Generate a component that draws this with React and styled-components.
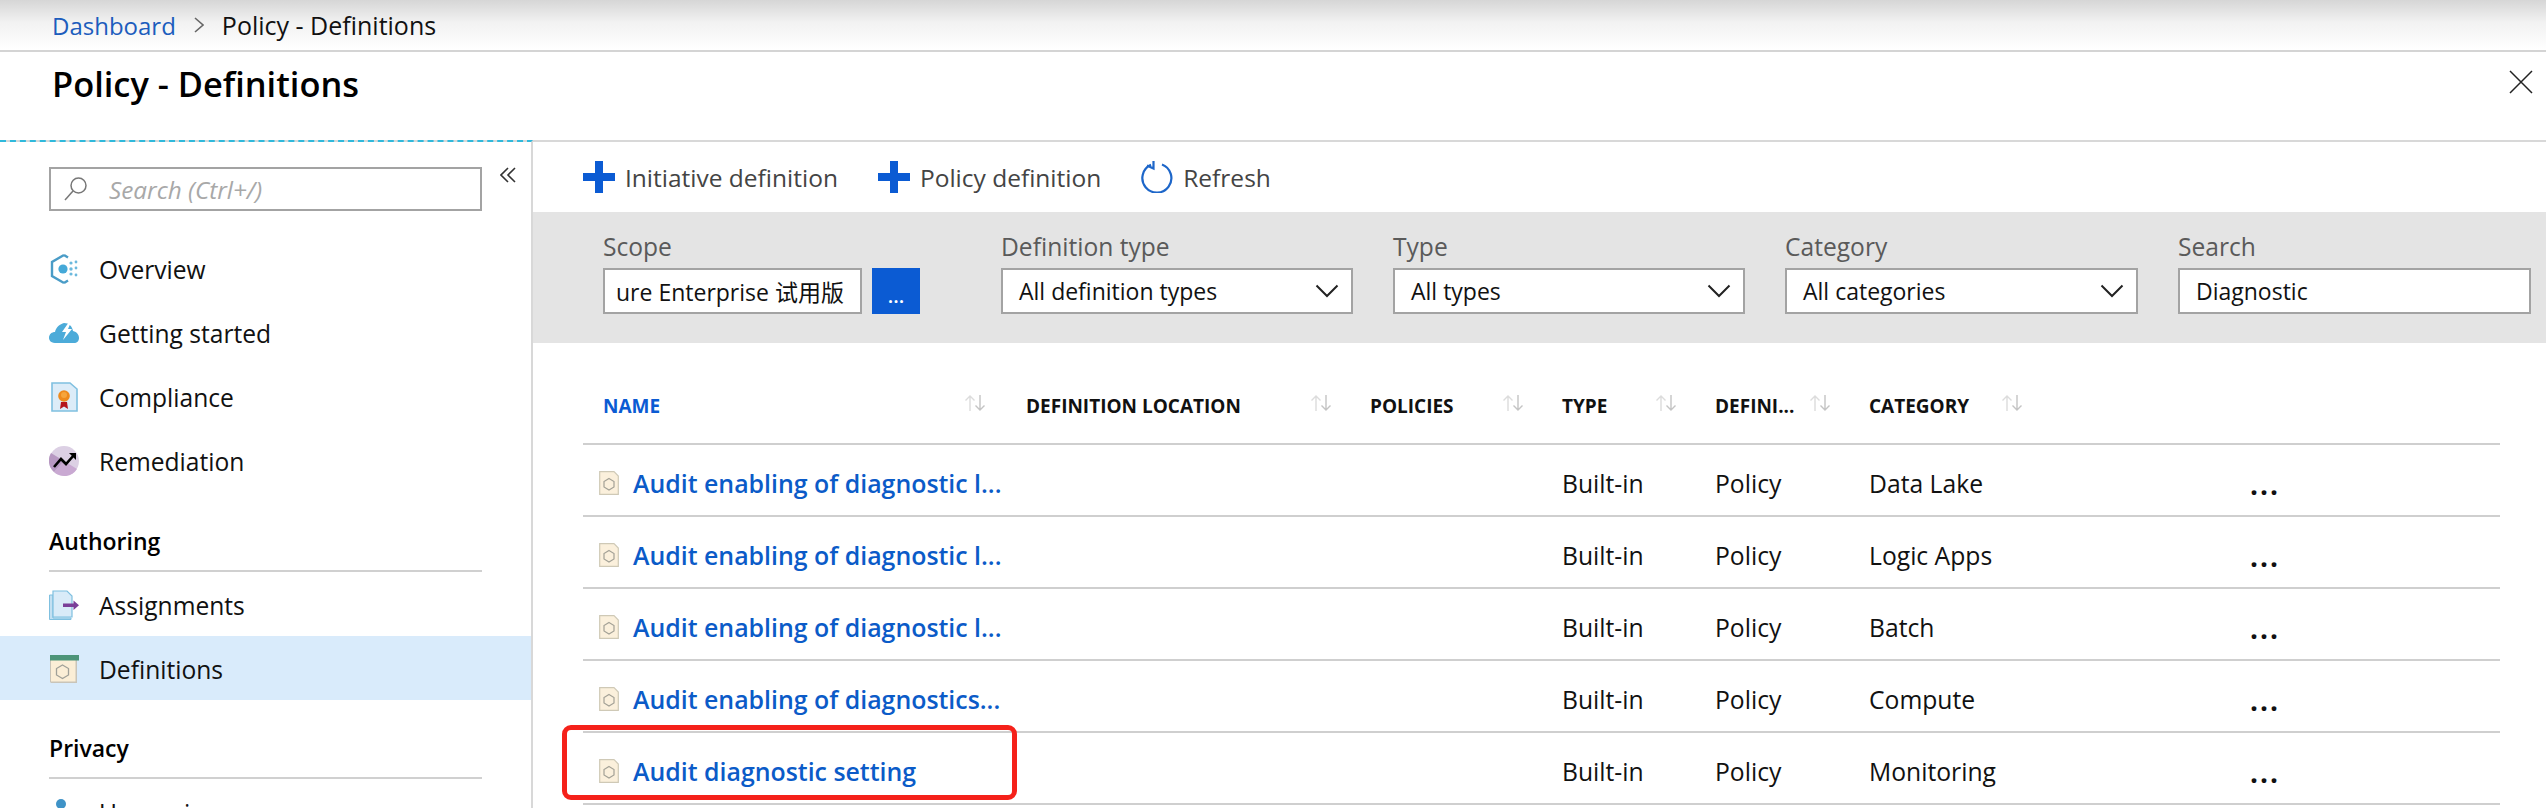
import React from 'react';
import styled, { createGlobalStyle } from 'styled-components';

const GlobalStyle = createGlobalStyle`
  html, body {
    margin: 0;
    padding: 0;
    background: #fff;
    overflow: hidden;
  }
  * {
    box-sizing: border-box;
  }
`;

const FONT = '"Open Sans", "Noto Sans CJK SC", sans-serif';

const Page = styled.div`
  width: 2546px;
  height: 808px;
  overflow: hidden;
  font-family: ${FONT};
  color: #111;
  background: #fff;
`;

const Breadcrumb = styled.div`
  height: 52px;
  display: flex;
  align-items: center;
  padding-left: 52px;
  font-size: 25px;
  background: linear-gradient(to bottom, #d6d6d6 0%, #f2f2f2 45%, #fff 100%);
  border-bottom: 2px solid #d4d4d4;
`;

const CrumbLink = styled.span`
  font-size: 24px;
  color: #1c5dbd;
`;

const CrumbArrow = styled.svg`
  width: 10px;
  height: 16px;
  margin: 0 18px;
`;

const TitleBar = styled.div`
  height: 90px;
  display: flex;
  justify-content: space-between;
  padding: 11px 13px 0 52px;
  border-bottom: 2px solid #d8d8d8;
`;

const Title = styled.h1`
  margin: 0;
  font-size: 34.4px;
  font-weight: 600;
  line-height: 42px;
  color: #000;
`;

const CloseIcon = styled.svg`
  width: 24px;
  height: 24px;
  margin-top: 7px;
`;

const Body = styled.div`
  display: flex;
  height: 666px;
`;

const Sidebar = styled.aside`
  width: 533px;
  flex: none;
  margin-top: -2px;
  padding-top: 25px;
  border-top: 2px dashed #2fb9dc;
  border-right: 2px solid #d8d8d8;
`;

const SearchRow = styled.div`
  display: flex;
  padding-left: 49px;
  margin-bottom: 25px;
`;

const SearchBox = styled.div`
  width: 433px;
  height: 44px;
  display: flex;
  align-items: center;
  gap: 21px;
  padding-left: 13px;
  border: 2px solid #a3a3a3;
  font-size: 24.3px;
  font-style: italic;
  color: #a8a8a8;
`;

const CollapseIcon = styled.svg`
  width: 16px;
  height: 16px;
  margin-left: 18px;
`;

const NavRow = styled.div`
  height: 64px;
  display: flex;
  align-items: center;
  gap: 20px;
  padding: 2px 0 0 49px;
  font-size: 24.6px;
  background: ${p => (p.$active ? '#d9ebfb' : 'transparent')};
`;

const NavIcon = styled.svg`
  width: 30px;
  height: 32px;
  flex: none;
`;

const SectionHead = styled.div`
  height: ${p => p.$h}px;
  margin: 0 49px;
  display: flex;
  align-items: flex-end;
  padding-bottom: 13px;
  font-size: 23px;
  font-weight: 600;
  color: #000;
  border-bottom: 2px solid #d0d0d0;
`;

const Main = styled.main`
  flex: 1;
  min-width: 0;
`;

const Toolbar = styled.div`
  height: 70px;
  display: flex;
  align-items: center;
  padding-left: 50px;
`;

const ToolButton = styled.div`
  display: flex;
  align-items: center;
  gap: 10px;
  margin-right: 40px;
  font-size: 24.5px;
  color: #444;
`;

const ToolIcon = styled.svg`
  width: 32px;
  height: 32px;
  flex: none;
`;

const FilterBand = styled.div`
  height: 131px;
  display: flex;
  gap: 40px;
  padding: 21px 0 0 70px;
  background: #e4e4e4;
`;

const Field = styled.div`
  width: ${p => p.$w || 352}px;
  flex: none;
`;

const FieldLabel = styled.div`
  height: 35px;
  font-size: 24.6px;
  line-height: 28px;
  color: #5a5a5a;
`;

const InputRow = styled.div`
  width: 317px;
  display: flex;
  gap: 10px;
`;

const Input = styled.div`
  flex: 1;
  min-width: 0;
  height: 46px;
  display: flex;
  align-items: center;
  justify-content: space-between;
  padding: 0 12px 0 ${p => p.$pad || 16}px;
  background: #fff;
  border: 2px solid #a3a3a3;
  font-size: 23px;
  white-space: nowrap;
  overflow: hidden;
  color: #111;
`;

const PickerButton = styled.div`
  width: 48px;
  height: 46px;
  flex: none;
  display: flex;
  align-items: flex-end;
  justify-content: center;
  padding-bottom: 8px;
  background: #0b5bd3;
  color: #fff;
  font-size: 20px;
  line-height: 20px;
  font-weight: 600;
`;

const Chevron = styled.svg`
  width: 24px;
  height: 14px;
  flex: none;
`;

const Table = styled.div`
  margin: 0 46px 0 50px;
`;

const GridRow = styled.div`
  position: relative;
  display: grid;
  grid-template-columns: 443px 344px 192px 153px 154px 192px 189px 1fr;
  align-items: center;
  border-bottom: 2px solid #cfcfcf;
  height: 72px;
  padding-top: 6px;
`;

const HeadRow = styled(GridRow)`
  height: 102px;
  padding-top: 26px;
`;

const HeadCell = styled.div`
  display: flex;
  align-items: center;
  justify-content: space-between;
  padding: 0 ${p => p.$right || 38}px 0 ${p => p.$pad || 0}px;
  font-size: 19px;
  font-weight: 700;
  color: ${p => (p.$active ? '#0b5bd3' : '#111')};
  white-space: nowrap;
`;

const SortIcon = styled.svg`
  width: 22px;
  height: 18px;
  flex: none;
  margin-top: -6px;
`;

const NameCell = styled.div`
  display: flex;
  align-items: center;
  gap: 14px;
  padding-left: 16px;
`;

const NameLink = styled.span`
  font-size: 24.9px;
  font-weight: 600;
  color: #0b5bc8;
  white-space: nowrap;
`;

const TextCell = styled.div`
  font-size: 24.7px;
  font-weight: 500;
  color: #111;
`;

const MoreCell = styled.div`
  font-size: 28px;
  font-weight: 700;
  line-height: 28px;
  letter-spacing: 2px;
  color: #111;
  margin-top: 2px;
`;

const Highlight = styled.div`
  position: absolute;
  left: -21px;
  top: -8px;
  width: 455px;
  height: 75px;
  border: 5px solid #f5211a;
  border-radius: 9px;
  pointer-events: none;
`;

const OverviewGlyph = () => (
  <NavIcon viewBox="0 0 30 32">
    <path d="M15 2 L3 9 V23 L15 30" fill="none" stroke="#4a9cc7" strokeWidth="2.4" />
    <path d="M15 2 L19 4.5 M15 30 L19 27.5" fill="none" stroke="#4a9cc7" strokeWidth="2.4" />
    <circle cx="14" cy="16" r="4.6" fill="#45a9d8" />
    <circle cx="22" cy="10" r="1.6" fill="#6cb9dd" />
    <circle cx="27" cy="9" r="1.4" fill="#6cb9dd" />
    <circle cx="22" cy="16" r="1.7" fill="#6cb9dd" />
    <circle cx="27" cy="15" r="1.4" fill="#6cb9dd" />
    <circle cx="22" cy="21" r="1.6" fill="#6cb9dd" />
    <circle cx="27" cy="22" r="1.4" fill="#6cb9dd" />
  </NavIcon>
);

const CloudGlyph = () => (
  <NavIcon viewBox="0 0 30 32">
    <path d="M6 26 C1 26 0 22 0 21 C0 17 3 15 6 15 C7 10 11 7 15 6 C20 6 23 9 24 14 C28 15 30 18 30 21 C30 24 28 26 25 26 Z" fill="#4cabd9" />
    <path d="M20 5 L13 15 H17 L14 23 L23 12 H19 L22 5 Z" fill="#fff" />
  </NavIcon>
);

const ComplianceGlyph = () => (
  <NavIcon viewBox="0 0 30 32">
    <path d="M3 2 H21 L28 8 V30 H3 Z" fill="#dcecf8" stroke="#7fc0e0" strokeWidth="1.6" />
    <path d="M12 21 L11 28 L15 25.5 L19 28 L18 21 Z" fill="#b5161c" />
    <circle cx="15" cy="15" r="5.8" fill="#ee8a1c" />
    <circle cx="15" cy="14" r="3" fill="#f6a53c" />
  </NavIcon>
);

const RemediationGlyph = () => (
  <NavIcon viewBox="0 0 30 32">
    <circle cx="15" cy="16" r="15" fill="#dcd0e4" />
    <path d="M15 16 L28 24 A15 15 0 0 1 5 27 Z" fill="#c9a9d2" />
    <path d="M15 16 L2 8 A15 15 0 0 0 5 27 Z" fill="#b798c2" />
    <path d="M5 22 L12 14 L17 19 L25 10" fill="none" stroke="#000" strokeWidth="2.6" />
    <path d="M20 8 H27 V15 Z" fill="#000" />
  </NavIcon>
);

const AssignmentGlyph = () => (
  <NavIcon viewBox="0 0 30 32">
    <path d="M0.5 6 H4 V29 H22 V30.5 H0.5 Z" fill="#c3e0f2" stroke="#7fc0e0" />
    <path d="M4 2 H18 L23 7 V28 H4 Z" fill="#d9ebf8" stroke="#7fc0e0" strokeWidth="1.2" />
    <path d="M14 14.5 H24.5 V11.5 L30 16.2 L24.5 21 V18 H14 Z" fill="#7a3f98" />
  </NavIcon>
);

const DefinitionGlyph = () => (
  <NavIcon viewBox="0 0 30 32">
    <rect x="2" y="6" width="26" height="24" fill="#c9c4b8" />
    <rect x="1.5" y="6" width="25.5" height="23" fill="#fbeed6" stroke="#c9c4b8" />
    <rect x="1" y="2" width="29" height="5.5" fill="#4d9478" />
    <path d="M13.5 12 L19.5 15.5 V22 L13.5 25.5 L7.5 22 V15.5 Z" fill="none" stroke="#a0a098" strokeWidth="1.3" />
  </NavIcon>
);

const UserGlyph = () => (
  <NavIcon viewBox="0 0 30 32">
    <circle cx="12" cy="8" r="5" fill="#3f93c7" />
    <path d="M3 28 C3 18 21 18 21 28 Z" fill="#3f93c7" />
  </NavIcon>
);

const RowIcon = styled.svg`
  width: 20px;
  height: 24px;
  flex: none;
`;

const PolicyDoc = () => (
  <RowIcon viewBox="0 0 20 24">
    <path d="M0.7 0.7 H15 L19.3 5 V23.3 H0.7 Z" fill="#fbf0dc" stroke="#cfc9b6" strokeWidth="1.2" />
    <path d="M10 7.5 L15 10.5 V16 L10 19 L5 16 V10.5 Z" fill="none" stroke="#a3a196" strokeWidth="1.2" />
  </RowIcon>
);

const Plus = () => (
  <ToolIcon viewBox="0 0 32 32">
    <path d="M12 0 H20 V12 H32 V20 H20 V32 H12 V20 H0 V12 H12 Z" fill="#0b5bd3" />
  </ToolIcon>
);

const Refresh = () => (
  <ToolIcon viewBox="0 0 32 32">
    <path d="M21 3.5 A14.5 14.5 0 1 1 10 3.8" fill="none" stroke="#1d66c9" strokeWidth="2.2" />
    <path d="M12.5 0 V7.5 L6 4.5" fill="none" stroke="#1d66c9" strokeWidth="2.2" />
  </ToolIcon>
);

const Sort = () => (
  <SortIcon viewBox="0 0 22 18">
    <path d="M6 17 V2 M1.5 6.5 L6 2 L10.5 6.5" fill="none" stroke="#dcdcdc" strokeWidth="1.4" />
    <path d="M16 1 V16 M11.5 11.5 L16 16 L20.5 11.5" fill="none" stroke="#c4c4c4" strokeWidth="1.4" />
  </SortIcon>
);

const DropChevron = () => (
  <Chevron viewBox="0 0 24 14">
    <path d="M1.5 1.5 L12 12 L22.5 1.5" fill="none" stroke="#222" strokeWidth="2" />
  </Chevron>
);

const rows = [
  { name: 'Audit enabling of diagnostic l...', category: 'Data Lake' },
  { name: 'Audit enabling of diagnostic l...', category: 'Logic Apps' },
  { name: 'Audit enabling of diagnostic l...', category: 'Batch' },
  { name: 'Audit enabling of diagnostics...', category: 'Compute' },
  { name: 'Audit diagnostic setting', category: 'Monitoring', marked: true },
];

const App = () => (
  <Page>
    <GlobalStyle />
    <Breadcrumb>
      <CrumbLink>Dashboard</CrumbLink>
      <CrumbArrow viewBox="0 0 10 16">
        <path d="M1 1 L9 8 L1 15" fill="none" stroke="#666" strokeWidth="1.6" />
      </CrumbArrow>
      <span>Policy - Definitions</span>
    </Breadcrumb>
    <TitleBar>
      <Title>Policy - Definitions</Title>
      <CloseIcon viewBox="0 0 24 24">
        <path d="M1 1 L23 23 M23 1 L1 23" fill="none" stroke="#222" strokeWidth="1.5" />
      </CloseIcon>
    </TitleBar>
    <Body>
      <Sidebar>
        <SearchRow>
          <SearchBox>
            <svg width="24" height="26" viewBox="0 0 24 26">
              <circle cx="14.5" cy="9.5" r="7.5" fill="none" stroke="#777" strokeWidth="1.5" />
              <path d="M9 15 L1 24" fill="none" stroke="#777" strokeWidth="1.5" />
            </svg>
            Search (Ctrl+/)
          </SearchBox>
          <CollapseIcon viewBox="0 0 16 16">
            <path d="M8 1 L1 8 L8 15 M15 1 L8 8 L15 15" fill="none" stroke="#333" strokeWidth="1.6" />
          </CollapseIcon>
        </SearchRow>
        <NavRow><OverviewGlyph />Overview</NavRow>
        <NavRow><CloudGlyph />Getting started</NavRow>
        <NavRow><ComplianceGlyph />Compliance</NavRow>
        <NavRow><RemediationGlyph />Remediation</NavRow>
        <SectionHead $h={80}>Authoring</SectionHead>
        <NavRow><AssignmentGlyph />Assignments</NavRow>
        <NavRow $active><DefinitionGlyph />Definitions</NavRow>
        <SectionHead $h={79}>Privacy</SectionHead>
        <NavRow><UserGlyph />User privacy</NavRow>
      </Sidebar>
      <Main>
        <Toolbar>
          <ToolButton><Plus />Initiative definition</ToolButton>
          <ToolButton><Plus />Policy definition</ToolButton>
          <ToolButton><Refresh />Refresh</ToolButton>
        </Toolbar>
        <FilterBand>
          <Field $w={358}>
            <FieldLabel>Scope</FieldLabel>
            <InputRow>
              <Input $pad={11}>ure Enterprise 试用版</Input>
              <PickerButton>...</PickerButton>
            </InputRow>
          </Field>
          <Field>
            <FieldLabel>Definition type</FieldLabel>
            <Input>All definition types<DropChevron /></Input>
          </Field>
          <Field>
            <FieldLabel>Type</FieldLabel>
            <Input>All types<DropChevron /></Input>
          </Field>
          <Field $w={353}>
            <FieldLabel>Category</FieldLabel>
            <Input>All categories<DropChevron /></Input>
          </Field>
          <Field $w={353}>
            <FieldLabel>Search</FieldLabel>
            <Input>Diagnostic</Input>
          </Field>
        </FilterBand>
        <Table>
          <HeadRow>
            <HeadCell $pad={20} $right={40} $active>NAME<Sort /></HeadCell>
            <HeadCell>DEFINITION LOCATION<Sort /></HeadCell>
            <HeadCell>POLICIES<Sort /></HeadCell>
            <HeadCell>TYPE<Sort /></HeadCell>
            <HeadCell>DEFINI...<Sort /></HeadCell>
            <HeadCell>CATEGORY<Sort /></HeadCell>
          </HeadRow>
          {rows.map(row => (
            <GridRow key={row.category}>
              <NameCell>
                <PolicyDoc />
                <NameLink>{row.name}</NameLink>
              </NameCell>
              <div />
              <div />
              <TextCell>Built-in</TextCell>
              <TextCell>Policy</TextCell>
              <TextCell>{row.category}</TextCell>
              <div />
              <MoreCell>...</MoreCell>
              {row.marked && <Highlight />}
            </GridRow>
          ))}
        </Table>
      </Main>
    </Body>
  </Page>
);

export default App;
